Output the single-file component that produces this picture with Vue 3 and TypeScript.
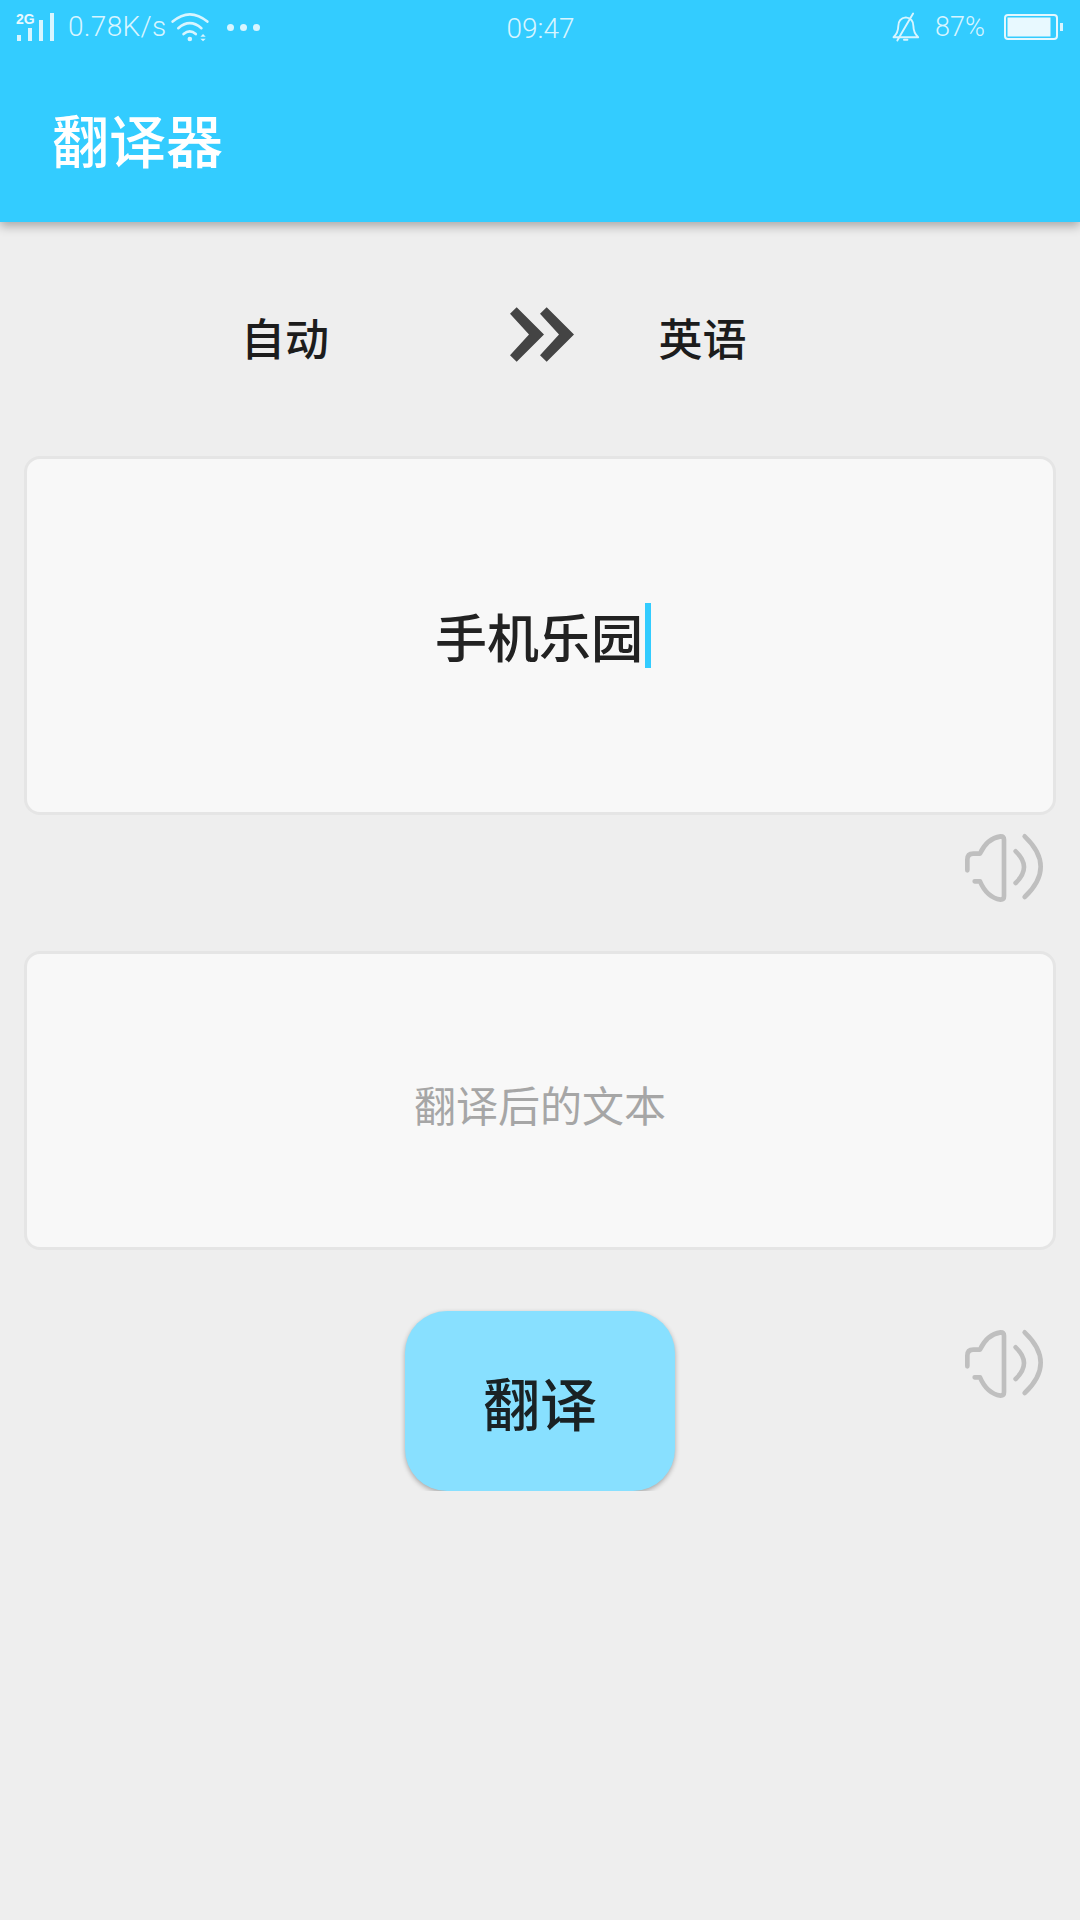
<script setup lang="ts">
const bars: { x: number; y: number }[] = [
  { x: 0, y: 22 },
  { x: 11, y: 15 },
  { x: 22, y: 7 },
  { x: 33, y: 0 },
]
</script>

<template>
  <div class="page">
    <header class="appbar">
      <div class="status">
        <div class="status-left">
          <div class="signal">
            <span class="net">2G</span>
            <svg width="37" height="28" viewBox="0 0 37 28">
              <rect v-for="b in bars" :key="b.x" :x="b.x" :y="b.y" width="4" :height="28 - b.y" fill="#d8f5ff" />
            </svg>
          </div>
          <span class="stat-text speed">0.78K/s</span>
          <svg class="wifi" width="42" height="33" viewBox="510 30 125 100" fill="none" stroke="#d8f5ff" stroke-width="8" stroke-linecap="round">
            <path d="M520 62 Q572 18 625 62" />
            <path d="M537 82 Q572 52 607 82" />
            <path d="M553 100 Q572 84 590 100" />
            <circle cx="572" cy="115" r="7" fill="#d8f5ff" stroke="none" />
            <path d="M604 108 L612 100 L620 108 Z" fill="#d8f5ff" stroke="none" />
            <path d="M604 114 L620 114 L612 122 Z" fill="#d8f5ff" stroke="none" />
          </svg>
          <div class="dots"><i></i><i></i><i></i></div>
        </div>
        <span class="stat-text clock">09:47</span>
        <div class="status-right">
          <svg class="bell" width="30" height="30" viewBox="95 35 95 95" fill="none" stroke="#d8f5ff" stroke-width="6" stroke-linecap="round" stroke-linejoin="round">
            <path d="M103 115 Q118 100 118 80 Q118 55 142 52 Q166 55 166 80 Q166 100 181 115 Z" />
            <path d="M165 40 L115 125" />
            <path d="M136 123 H147" />
          </svg>
          <span class="stat-text pct">87%</span>
          <svg class="battery" width="60" height="26" viewBox="0 0 60 26">
            <rect x="1" y="1" width="52" height="24" rx="3" fill="none" stroke="#e4f8ff" stroke-width="2" />
            <rect x="3.5" y="3.5" width="43" height="19" fill="#e8f9ff" />
            <rect x="56" y="9" width="3" height="8" fill="#d8f5ff" />
          </svg>
        </div>
      </div>
      <div class="title-row">
        <h1 class="title">翻译器</h1>
      </div>
    </header>

    <main class="content">
      <div class="lang-row">
        <span class="lang from">自动</span>
        <svg class="swap" width="64" height="55" viewBox="90 78 192 164">
          <path d="M110 78 L192 160 L110 242 L90 222 L147 160 L90 98 Z" fill="#444" />
          <path d="M200 78 L282 160 L200 242 L180 222 L237 160 L180 98 Z" fill="#444" />
        </svg>
        <span class="lang to">英语</span>
      </div>

      <section class="card card-input">
        <span class="input-text">手机乐园</span><span class="cursor"></span>
      </section>

      <div class="speak-row">
        <svg class="speaker" width="80" height="70" viewBox="0 0 240 210" fill="none" stroke="#bfbfbf" stroke-width="14" stroke-linecap="round" stroke-linejoin="round">
          <path d="M10 112 V80 Q10 62 28 62 H48 C62 30 85 14 110 10 Q120 10 120 20 V190 Q120 200 110 200 C85 196 62 178 48 145 H32" />
          <path d="M155 55 Q205 102 155 150" />
          <path d="M182 10 Q278 101 182 192" />
        </svg>
      </div>

      <section class="card card-output">
        <span class="placeholder">翻译后的文本</span>
      </section>

      <div class="action-row">
        <button class="translate" type="button">翻译</button>
        <svg class="speaker speaker-2" width="80" height="70" viewBox="0 0 240 210" fill="none" stroke="#bfbfbf" stroke-width="14" stroke-linecap="round" stroke-linejoin="round">
          <path d="M10 112 V80 Q10 62 28 62 H48 C62 30 85 14 110 10 Q120 10 120 20 V190 Q120 200 110 200 C85 196 62 178 48 145 H32" />
          <path d="M155 55 Q205 102 155 150" />
          <path d="M182 10 Q278 101 182 192" />
        </svg>
      </div>
    </main>
  </div>
</template>

<style scoped>
.page {
  width: 1080px;
  height: 1920px;
  overflow: hidden;
  background: #eeeeee;
  font-family: "Noto Sans CJK SC", "Noto Sans", sans-serif;
  color: #1c1c1c;
}
.appbar {
  height: 222px;
  background: #33ccff;
  box-shadow: 0 4px 10px rgba(0, 0, 0, 0.3);
  position: relative;
}
.status {
  height: 54px;
  display: grid;
  grid-template-columns: 1fr auto 1fr;
  align-items: center;
  padding: 0 16px 0 17px;
}
.status-left {
  display: flex;
  align-items: center;
}
.status-right {
  display: flex;
  align-items: center;
  justify-content: flex-end;
}
.signal {
  position: relative;
  width: 37px;
  height: 28px;
}
.signal svg {
  display: block;
}
.net {
  position: absolute;
  left: -1px;
  top: 0;
  font: 700 14px/12px "Liberation Sans", sans-serif;
  color: #e8f9ff;
}
.stat-text {
  font-family: Roboto, "Noto Sans", sans-serif;
  font-weight: 300;
  font-size: 28px;
  line-height: 34px;
  color: #d8f5ff;
}
.speed {
  margin-left: 14px;
  letter-spacing: 0.3px;
}
.wifi {
  margin-left: 3px;
}
.clock {
  padding-top: 3px;
}
.dots {
  display: flex;
  gap: 6px;
  margin-left: 16px;
  padding-top: 1px;
}
.dots i {
  width: 7px;
  height: 7px;
  border-radius: 50%;
  background: #d8f5ff;
}
.pct {
  margin-left: 14px;
  font-size: 27px;
}
.battery {
  margin-left: 19px;
}
.title-row {
  height: 168px;
  display: flex;
  align-items: center;
  padding-left: 52px;
  box-sizing: border-box;
}
.title {
  margin: 0;
  font-size: 57px;
  line-height: 70px;
  font-weight: 500;
  color: #fff;
}
.content {
  padding: 0 24px;
}
.lang-row {
  height: 234px;
  margin: 0 -24px;
  display: grid;
  grid-template-columns: 510px 64px 257px;
  align-items: center;
}
.lang {
  font-size: 44px;
  line-height: 56px;
  text-align: center;
  font-weight: 500;
  padding-bottom: 5px;
}
.from {
  padding-left: 60px;
}
.swap {
  margin-top: -10px;
}
.card {
  box-sizing: border-box;
  background: #f8f8f8;
  border: 3px solid #e5e5e5;
  border-radius: 16px;
  display: flex;
  align-items: center;
  justify-content: center;
}
.card-input {
  height: 359px;
  padding-left: 6px;
}
.input-text {
  font-size: 52px;
  line-height: 66px;
  color: #222;
  font-weight: 500;
}
.cursor {
  width: 6px;
  height: 65px;
  margin-left: 2px;
  background: #33ccff;
}
.speak-row {
  display: flex;
  justify-content: flex-end;
  padding: 18px 12px 48px 0;
}
.speaker {
  display: block;
}
.card-output {
  height: 299px;
  padding-top: 6px;
}
.placeholder {
  font-size: 42px;
  line-height: 56px;
  color: #a6a6a6;
}
.action-row {
  margin-top: 61px;
  display: grid;
  grid-template-columns: 1fr 270px 1fr;
  align-items: start;
}
.translate {
  grid-column: 2;
  width: 270px;
  height: 180px;
  border: none;
  border-radius: 42px;
  background: #88e0ff;
  color: #1a2224;
  font-family: inherit;
  font-size: 57px;
  font-weight: 500;
  line-height: 70px;
  padding: 0;
  box-shadow: 0 2px 5px rgba(0, 0, 0, 0.3);
  clip-path: inset(-6px -6px 0 -6px);
}
.speaker-2 {
  grid-column: 3;
  justify-self: end;
  margin: 18px 12px 0 0;
}
</style>

<style>
html,
body {
  margin: 0;
  background: #eeeeee;
}
</style>
